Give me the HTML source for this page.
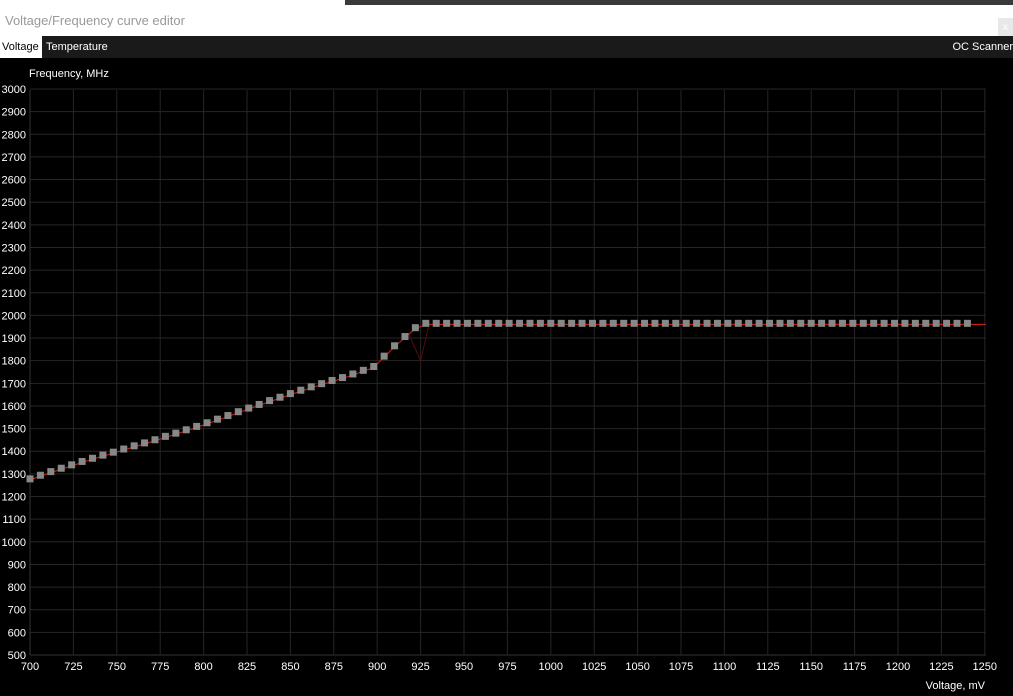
<!DOCTYPE html>
<html><head><meta charset="utf-8"><style>
body{margin:0;width:1013px;height:696px;background:#000;overflow:hidden;font-family:"Liberation Sans",Arial,sans-serif;position:relative}
.top{position:absolute;left:0;top:0;width:1013px;height:5px;background:#fff}
.top2{position:absolute;left:345px;top:0;width:668px;height:5px;background:#3a3a3a}
.title{position:absolute;left:0;top:5px;width:1013px;height:31px;background:#fff;color:#999;font-size:13px;line-height:31px;padding-left:5px;box-sizing:border-box}
.x{position:absolute;right:0;top:13px;width:15px;height:19px;background:#e8e8e8;color:#fff;font-size:10px;text-align:center;line-height:19px}
.tabs{position:absolute;left:0;top:36px;width:1013px;height:22px;background:#1a1a1a;font-size:11px;line-height:22px;color:#fff}
.t1{position:absolute;left:0;top:0;width:42px;height:22px;background:#fff;color:#000;padding-left:2px;box-sizing:border-box}
.t2{position:absolute;left:46px}
.t3{position:absolute;right:0}
svg{position:absolute;left:0;top:58px}
</style></head><body>
<div class="top"></div><div class="top2"></div>
<div class="title">Voltage/Frequency curve editor<div class="x">x</div></div>
<div class="tabs"><div class="t1">Voltage</div><div class="t2">Temperature</div><div class="t3">OC Scanner</div></div>
<svg id="s" width="1013" height="638" viewBox="0 58 1013 638" font-family="Liberation Sans, Arial, sans-serif" font-size="11" fill="#fff"></svg>
<script>
var s=document.getElementById('s'),h='';
function X(v){return 30+(v-700)*43.4/25}
function Y(f){return 655-(f-500)*0.2264}
h+='<text x="29" y="77">Frequency, MHz</text>';
for(var f=500;f<=3000;f+=100){var y=Y(f);h+='<line x1="30" x2="986" y1="'+y+'" y2="'+y+'" stroke="'+(f==500?'#333':'#262626')+'"/>';h+='<text x="26" y="'+(y+4)+'" text-anchor="end">'+f+'</text>';}
for(var v=700;v<=1250;v+=25){var x=X(v);h+='<line x1="'+x+'" x2="'+x+'" y1="90" y2="655" stroke="'+(v==700?'#333':'#262626')+'"/>';h+='<text x="'+x+'" y="670" text-anchor="middle">'+v+'</text>';}
h+='<text x="985" y="689" text-anchor="end">Voltage, mV</text>';
var kp=[[700,1275],[875,1712],[893,1760],[900,1780],[905,1830],[912,1880],[918,1920],[925,1965],[1250,1965]];
function F(v){for(var i=0;i<kp.length-1;i++){if(v<=kp[i+1][0]){var a=kp[i],b=kp[i+1];return a[1]+(b[1]-a[1])*(v-a[0])/(b[0]-a[0]);}}return 1965}
var pts=[],p='';
for(var v=700;v<=1244;v+=6.0){var f=F(v);if(v<875)f+=Math.round(Math.sin(v)*5);pts.push([X(v),Y(f)]);}
h+='<polyline fill="none" stroke="#5a0a0a" stroke-width="1" points="'+X(918)+','+Y(1920)+' '+X(925)+','+Y(1800)+' '+X(930)+','+Y(1965)+'"/>';
pts.forEach(function(q){p+=q[0]+','+(q[1]+1)+' '});p+='986,'+(Y(1965)+1);
h+='<polyline fill="none" stroke="#e02010" stroke-width="1" points="'+p+'"/>';
pts.forEach(function(q){h+='<rect x="'+(q[0]-3.5)+'" y="'+(q[1]-3.5)+'" width="7" height="7" fill="#888"/>'});
s.innerHTML=h;
</script>
</body></html>
